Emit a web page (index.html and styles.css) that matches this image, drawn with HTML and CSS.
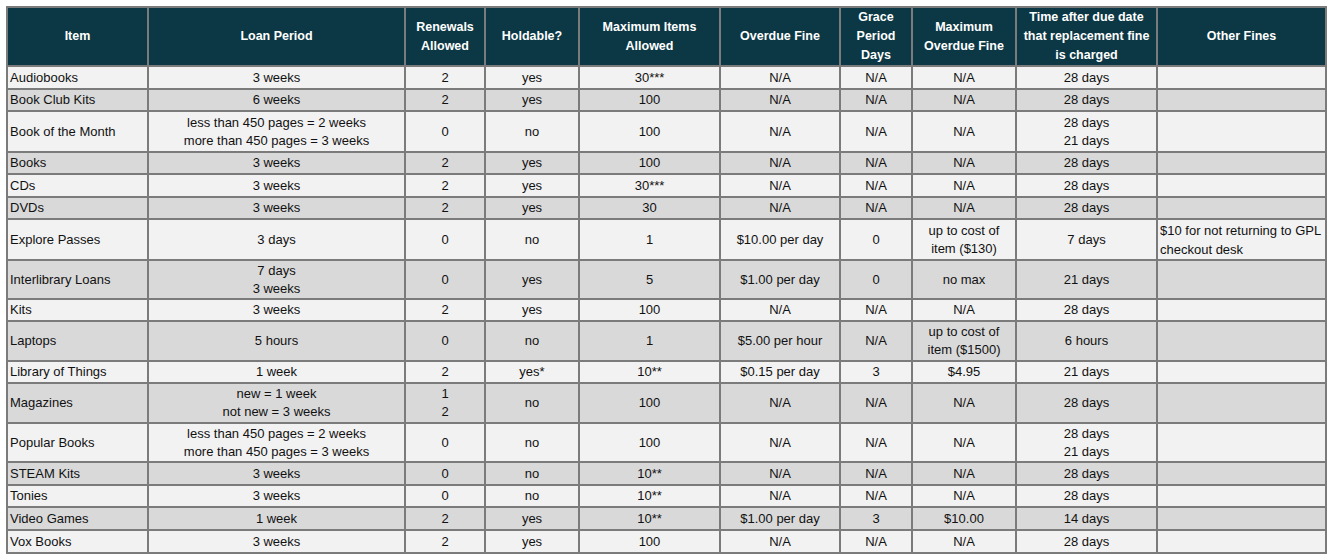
FILE: index.html
```html
<!DOCTYPE html>
<html lang="en">
<head>
<meta charset="utf-8">
<title>Loan Periods and Fines</title>
<link rel="stylesheet" href="styles.css">
</head>
<body>
<table class="policy">
  <colgroup>
    <col class="c-item"><col class="c-loan"><col class="c-renew"><col class="c-hold"><col class="c-max">
    <col class="c-fine"><col class="c-grace"><col class="c-maxfine"><col class="c-time"><col class="c-other">
  </colgroup>
  <thead>
    <tr class="head">
      <th>Item</th>
      <th>Loan Period</th>
      <th>Renewals<br>Allowed</th>
      <th>Holdable?</th>
      <th>Maximum Items<br>Allowed</th>
      <th>Overdue Fine</th>
      <th>Grace<br>Period<br>Days</th>
      <th>Maximum<br>Overdue Fine</th>
      <th>Time after due date<br>that replacement fine<br>is charged</th>
      <th>Other Fines</th>
    </tr>
  </thead>
  <tbody>
    <tr class="h23"><td class="item">Audiobooks</td><td>3 weeks</td><td>2</td><td>yes</td><td>30***</td><td>N/A</td><td>N/A</td><td>N/A</td><td>28 days</td><td class="other"></td></tr>
    <tr class="h22 alt"><td class="item">Book Club Kits</td><td>6 weeks</td><td>2</td><td>yes</td><td>100</td><td>N/A</td><td>N/A</td><td>N/A</td><td>28 days</td><td class="other"></td></tr>
    <tr class="h41"><td class="item">Book of the Month</td><td>less than 450 pages = 2 weeks<br>more than 450 pages = 3 weeks</td><td>0</td><td>no</td><td>100</td><td>N/A</td><td>N/A</td><td>N/A</td><td>28 days<br>21 days</td><td class="other"></td></tr>
    <tr class="h22 alt"><td class="item">Books</td><td>3 weeks</td><td>2</td><td>yes</td><td>100</td><td>N/A</td><td>N/A</td><td>N/A</td><td>28 days</td><td class="other"></td></tr>
    <tr class="h23"><td class="item">CDs</td><td>3 weeks</td><td>2</td><td>yes</td><td>30***</td><td>N/A</td><td>N/A</td><td>N/A</td><td>28 days</td><td class="other"></td></tr>
    <tr class="h22 alt"><td class="item">DVDs</td><td>3 weeks</td><td>2</td><td>yes</td><td>30</td><td>N/A</td><td>N/A</td><td>N/A</td><td>28 days</td><td class="other"></td></tr>
    <tr class="h41"><td class="item">Explore Passes</td><td>3 days</td><td>0</td><td>no</td><td>1</td><td>$10.00 per day</td><td>0</td><td>up to cost of<br>item ($130)</td><td>7 days</td><td class="other">$10 for not returning to GPL<br>checkout desk</td></tr>
    <tr class="h39 alt"><td class="item">Interlibrary Loans</td><td>7 days<br>3 weeks</td><td>0</td><td>yes</td><td>5</td><td>$1.00 per day</td><td>0</td><td>no max</td><td>21 days</td><td class="other"></td></tr>
    <tr class="h22"><td class="item">Kits</td><td>3 weeks</td><td>2</td><td>yes</td><td>100</td><td>N/A</td><td>N/A</td><td>N/A</td><td>28 days</td><td class="other"></td></tr>
    <tr class="h40 alt"><td class="item">Laptops</td><td>5 hours</td><td>0</td><td>no</td><td>1</td><td>$5.00 per hour</td><td>N/A</td><td>up to cost of<br>item ($1500)</td><td>6 hours</td><td class="other"></td></tr>
    <tr class="h22"><td class="item">Library of Things</td><td>1 week</td><td>2</td><td>yes*</td><td>10**</td><td>$0.15 per day</td><td>3</td><td>$4.95</td><td>21 days</td><td class="other"></td></tr>
    <tr class="h40 alt"><td class="item">Magazines</td><td>new = 1 week<br>not new = 3 weeks</td><td>1<br>2</td><td>no</td><td>100</td><td>N/A</td><td>N/A</td><td>N/A</td><td>28 days</td><td class="other"></td></tr>
    <tr class="h39"><td class="item">Popular Books</td><td>less than 450 pages = 2 weeks<br>more than 450 pages = 3 weeks</td><td>0</td><td>no</td><td>100</td><td>N/A</td><td>N/A</td><td>N/A</td><td>28 days<br>21 days</td><td class="other"></td></tr>
    <tr class="h23 alt"><td class="item">STEAM Kits</td><td>3 weeks</td><td>0</td><td>no</td><td>10**</td><td>N/A</td><td>N/A</td><td>N/A</td><td>28 days</td><td class="other"></td></tr>
    <tr class="h22"><td class="item">Tonies</td><td>3 weeks</td><td>0</td><td>no</td><td>10**</td><td>N/A</td><td>N/A</td><td>N/A</td><td>28 days</td><td class="other"></td></tr>
    <tr class="h23 alt"><td class="item">Video Games</td><td>1 week</td><td>2</td><td>yes</td><td>10**</td><td>$1.00 per day</td><td>3</td><td>$10.00</td><td>14 days</td><td class="other"></td></tr>
    <tr class="h23"><td class="item">Vox Books</td><td>3 weeks</td><td>2</td><td>yes</td><td>100</td><td>N/A</td><td>N/A</td><td>N/A</td><td>28 days</td><td class="other"></td></tr>
  </tbody>
</table>
</body>
</html>
```

FILE: styles.css
```css
html, body {
  margin: 0;
  padding: 0;
  background: #ffffff;
}

body {
  padding: 6px 0 0 6px;
  font-family: "Liberation Sans", Arial, sans-serif;
  font-size: 13px;
  color: #111111;
}

.policy {
  border-collapse: separate;
  border-spacing: 0;
  table-layout: fixed;
  width: 1321px;
  border-top: 2px solid #7b7b7b;
  border-left: 2px solid #7b7b7b;
}

.c-item { width: 141px; }
.c-loan { width: 257px; }
.c-renew { width: 80px; }
.c-hold { width: 94px; }
.c-max { width: 141px; }
.c-fine { width: 120px; }
.c-grace { width: 72px; }
.c-maxfine { width: 104px; }
.c-time { width: 141px; }
.c-other { width: 169px; }

.policy th,
.policy td {
  box-sizing: border-box;
  border-right: 2px solid #7b7b7b;
  border-bottom: 2px solid #7b7b7b;
  padding: 0 1px;
  text-align: center;
  vertical-align: middle;
  line-height: 18px;
  overflow: hidden;
}

.policy th {
  background: #0c3744;
  color: #ffffff;
  font-weight: bold;
  font-size: 12.5px;
  line-height: 19px;
}

.head { height: 59px; }
.h22 { height: 22px; }
.h23 { height: 23px; }
.h39 { height: 39px; }
.h40 { height: 40px; }
.h41 { height: 41px; }

.policy td { background: #f2f2f2; }
.policy .alt td { background: #d9d9d9; }

.policy td.item {
  text-align: left;
  padding-left: 2px;
}

.policy td.other {
  text-align: left;
  padding-left: 2px;
  line-height: 19px;
}
```
